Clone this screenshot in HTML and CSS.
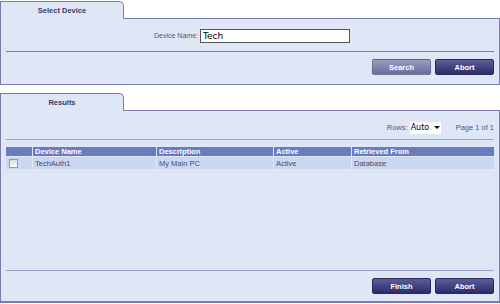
FILE: index.html
```html
<!DOCTYPE html>
<html lang="en">
<head>
    <meta charset="UTF-8">
    <title>Select Device</title>
    <link rel="stylesheet" href="styles.css">
</head>
<body>
    <div class="section">
        <div class="tab">Select Device</div>
        <div class="panel panel-top">
            <div class="field">
                <label for="deviceName">Device Name:</label>
                <input type="text" id="deviceName" value="Tech">
            </div>
            <div class="rule"></div>
            <div class="actions">
                <button class="btn btn-dim">Search</button>
                <button class="btn">Abort</button>
            </div>
        </div>
    </div>

    <div class="section">
        <div class="tab">Results</div>
        <div class="panel panel-results">
            <div class="pager">
                <span class="rows-label">Rows:</span>
                <span class="select">Auto <span class="caret"></span></span>
                <span class="page">Page 1 of 1</span>
            </div>
            <div class="rule rule-pager"></div>
            <table class="grid">
                <thead>
                    <tr>
                        <th class="col-check"></th>
                        <th class="col-name">Device Name</th>
                        <th class="col-desc">Description</th>
                        <th class="col-active">Active</th>
                        <th>Retrieved From</th>
                    </tr>
                </thead>
                <tbody>
                    <tr>
                        <td class="col-check"><span class="check"></span></td>
                        <td>TechAuth1</td>
                        <td>My Main PC</td>
                        <td>Active</td>
                        <td>Database</td>
                    </tr>
                </tbody>
            </table>
            <div class="spacer"></div>
            <div class="rule"></div>
            <div class="actions">
                <button class="btn">Finish</button>
                <button class="btn">Abort</button>
            </div>
        </div>
    </div>
</body>
</html>
```

FILE: styles.css
```css
body {
    margin: 0;
    font-family: "Liberation Sans", Arial, sans-serif;
    font-size: 7px;
    color: #4a4a72;
    background-color: #fff;
    width: 500px;
    height: 304px;
    overflow: hidden;
}
.section {
    display: flex;
    flex-direction: column;
}
.section + .section {
    margin-top: 7px;
}
.tab {
    width: 124px;
    height: 18px;
    box-sizing: border-box;
    margin-top: 1px;
    margin-bottom: -1px;
    border: 1px solid #7b7bae;
    border-bottom: none;
    border-top-right-radius: 5px;
    background-color: #dfe6f6;
    font-weight: bold;
    font-size: 7.5px;
    text-align: center;
    line-height: 18px;
    color: #3a3a66;
    position: relative;
    z-index: 1;
}
.panel {
    border: 1px solid #7b7bae;
    background-color: #dfe6f6;
    display: flex;
    flex-direction: column;
    padding: 0 5px;
    box-sizing: border-box;
}
.panel-top {
    height: 67px;
}
.panel-results {
    height: 193px;
    border-bottom: 2px solid #7b7bae;
}
.field {
    display: flex;
    justify-content: center;
    align-items: center;
    gap: 2px;
    margin-top: 10px;
    padding-left: 4px;
    height: 13px;
}
.field label {
    color: #555577;
}
.field input {
    width: 150px;
    height: 14px;
    box-sizing: border-box;
    border: 1px solid #555;
    padding: 0 2px;
    font-family: "DejaVu Sans", sans-serif;
    font-size: 9px;
    color: #000;
}
.rule {
    height: 1px;
    background-color: #7b7bae;
    margin-top: 9px;
}
.panel-results .rule {
    background-color: #9aa0c8;
}
.panel-results .rule-pager {
    margin-top: 5px;
}
.actions {
    display: flex;
    justify-content: flex-end;
    gap: 4px;
    margin-top: 7px;
}
.btn {
    width: 59px;
    height: 16px;
    border: 1px solid #2a2a5a;
    border-radius: 2px;
    background: linear-gradient(#5d5d9c, #2c2c6a);
    color: #fff;
    font-family: "Liberation Sans", Arial, sans-serif;
    font-size: 7.5px;
    font-weight: bold;
    padding: 0;
}
.btn-dim {
    border: 1px dotted #555;
    background: linear-gradient(#9a9cc0, #6c6e9c);
}
.pager {
    display: flex;
    justify-content: flex-end;
    align-items: center;
    height: 13px;
    margin-top: 10px;
    color: #555577;
    font-size: 7.5px;
}
.select {
    display: inline-flex;
    align-items: center;
    width: 31px;
    height: 12px;
    box-sizing: border-box;
    margin-left: 2px;
    padding-left: 1px;
    background-color: #fff;
    color: #000;
    font-family: "DejaVu Sans", sans-serif;
    font-size: 8px;
}
.caret {
    margin-left: 5px;
    border-left: 3px solid transparent;
    border-right: 3px solid transparent;
    border-top: 3px solid #000;
}
.page {
    margin-left: 15px;
}
.grid {
    border-collapse: collapse;
    width: 100%;
    margin-top: 7px;
}
.grid th {
    background-color: #6a7cbe;
    color: #fff;
    font-weight: bold;
    font-size: 7.5px;
    text-align: left;
    height: 9px;
    padding: 0 2px;
    line-height: 9px;
    border-left: 1px solid #dfe6f6;
}
.grid td {
    background-color: #c9d7f0;
    height: 12px;
    padding: 0 2px;
    border-left: 1px solid #dfe6f6;
    border-top: 1px solid #dfe6f6;
    color: #4a4a72;
    font-size: 7.5px;
}
.grid th:first-child,
.grid td:first-child {
    border-left: none;
}
.col-check {
    width: 22px;
}
.col-name {
    width: 119px;
}
.col-desc {
    width: 112px;
}
.col-active {
    width: 73px;
}
.check {
    display: block;
    width: 7px;
    height: 7px;
    margin-left: 1px;
    border: 1px solid #999;
    background: linear-gradient(#ddd, #fafafa);
}
.spacer {
    flex: 1;
}
.panel-results .actions {
    margin-bottom: 7px;
}
```
